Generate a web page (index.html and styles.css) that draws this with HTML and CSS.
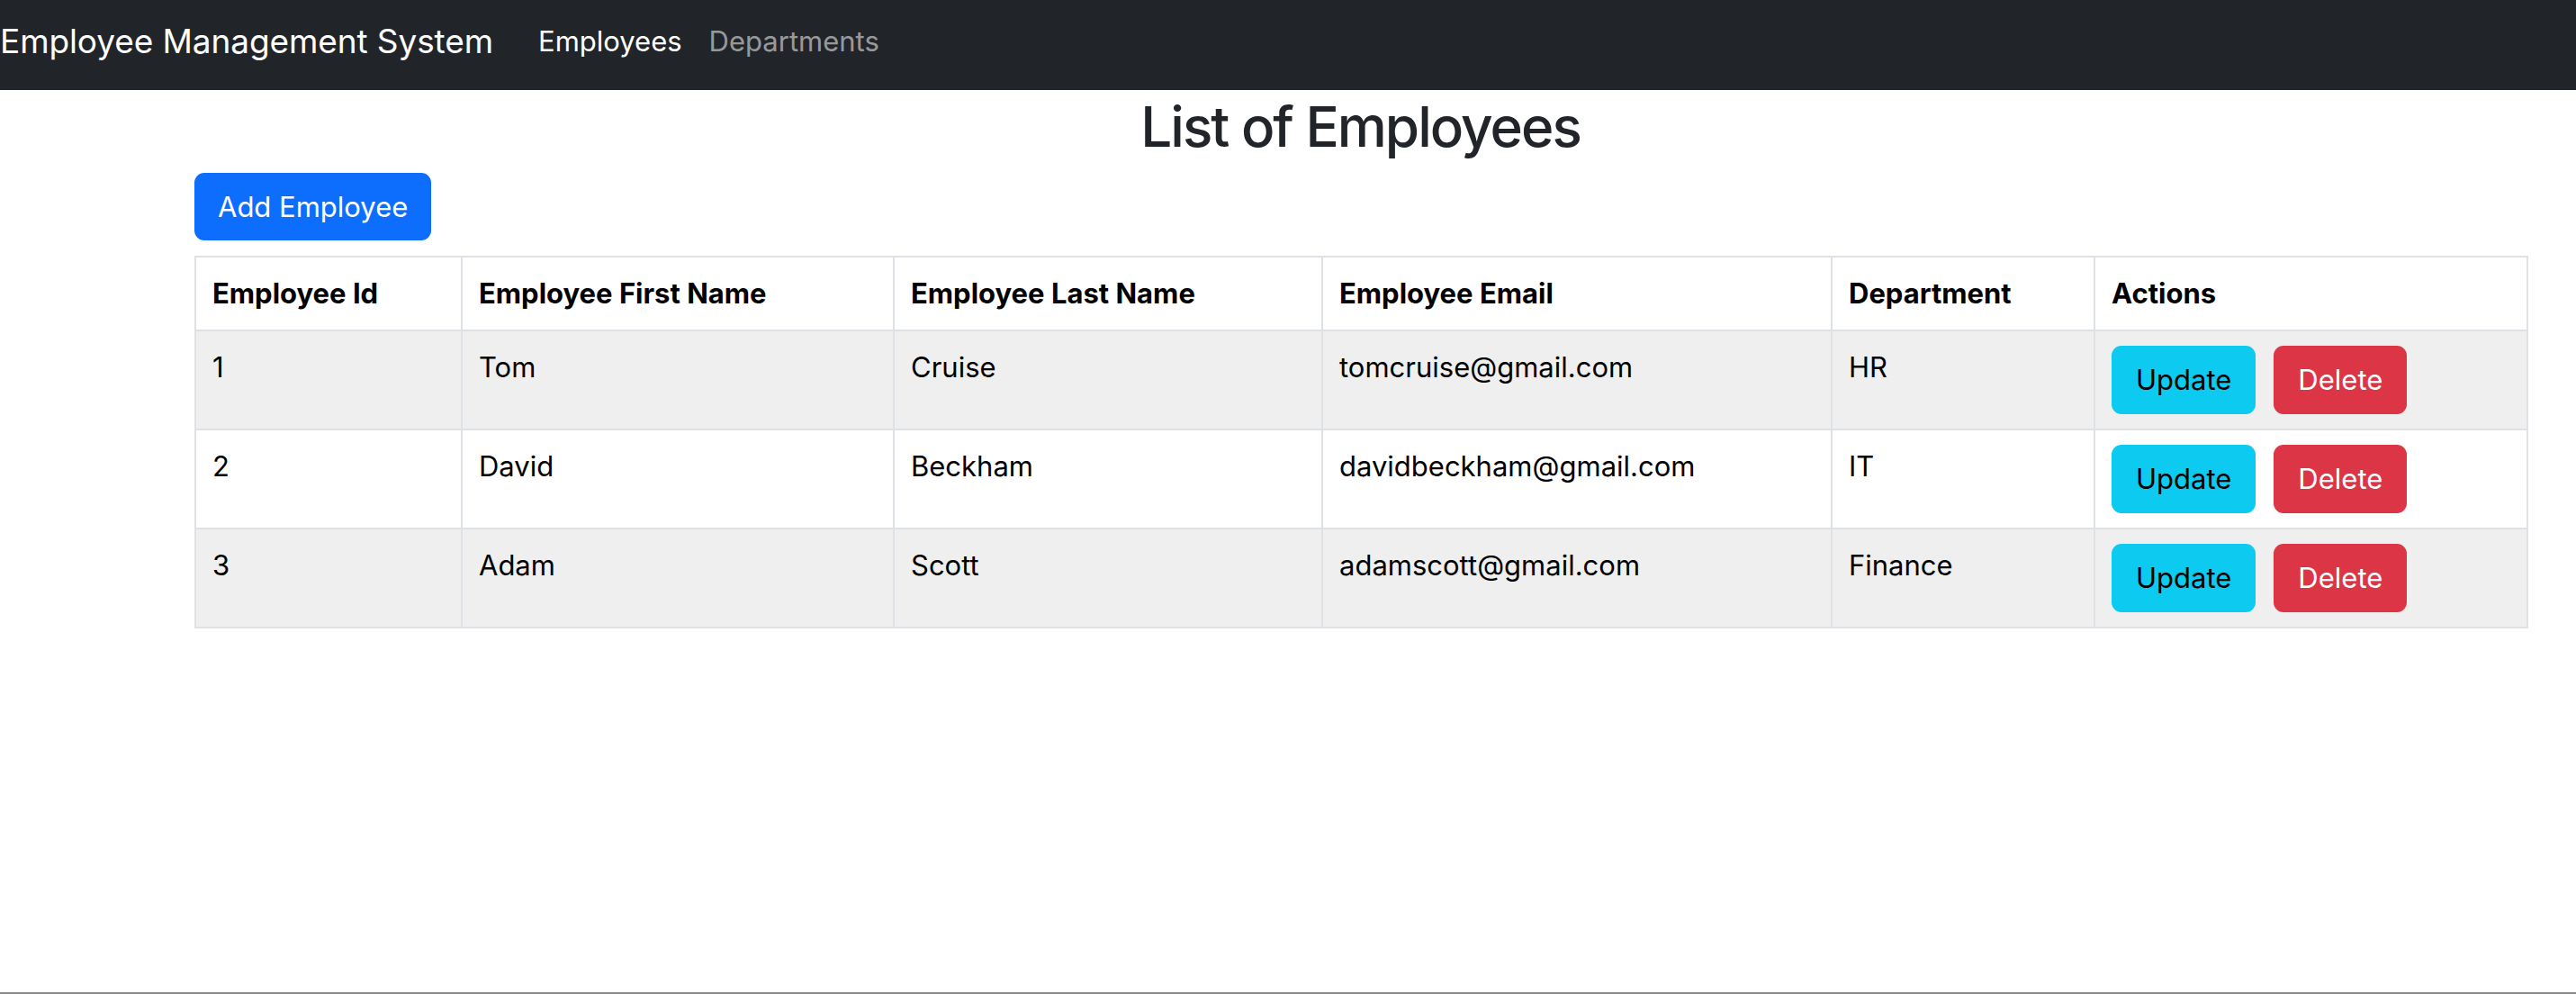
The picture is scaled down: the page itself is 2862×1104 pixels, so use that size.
FILE: index.html
```html
<!DOCTYPE html>
<html lang="en">
<head>
<meta charset="utf-8">
<title>Employee Management System</title>
<link rel="stylesheet" href="styles.css">
</head>
<body>
<div class="page">
  <nav class="navbar">
    <span class="brand">Employee Management System</span>
    <a class="nav-link active" href="#">Employees</a>
    <a class="nav-link" href="#">Departments</a>
  </nav>
  <main class="container">
    <h1 class="title">List of Employees</h1>
    <div class="toolbar">
      <button class="btn btn-primary btn-add">Add Employee</button>
    </div>
    <table class="table">
      <colgroup>
        <col class="c-id"><col class="c-first"><col class="c-last"><col class="c-email"><col class="c-dept"><col class="c-act">
      </colgroup>
      <thead>
        <tr>
          <th>Employee Id</th>
          <th>Employee First Name</th>
          <th>Employee Last Name</th>
          <th>Employee Email</th>
          <th>Department</th>
          <th>Actions</th>
        </tr>
      </thead>
      <tbody>
        <tr class="striped">
          <td>1</td><td>Tom</td><td>Cruise</td><td>tomcruise@gmail.com</td><td>HR</td>
          <td><button class="btn btn-info">Update</button><button class="btn btn-danger">Delete</button></td>
        </tr>
        <tr>
          <td>2</td><td>David</td><td>Beckham</td><td>davidbeckham@gmail.com</td><td>IT</td>
          <td><button class="btn btn-info">Update</button><button class="btn btn-danger">Delete</button></td>
        </tr>
        <tr class="striped">
          <td>3</td><td>Adam</td><td>Scott</td><td>adamscott@gmail.com</td><td>Finance</td>
          <td><button class="btn btn-info">Update</button><button class="btn btn-danger">Delete</button></td>
        </tr>
      </tbody>
    </table>
  </main>
  <div class="bottom-line"></div>
</div>
</body>
</html>
```

FILE: styles.css
```css
* { box-sizing: border-box; }
html, body { margin: 0; padding: 0; }
body {
  background: #ffffff;
  font-family: Inter, "Noto Sans", "Liberation Sans", sans-serif;
  color: #212529;
}
.page {
  min-height: 100vh;
  display: flex;
  flex-direction: column;
}
.navbar {
  height: 100px;
  background: #212529;
  display: flex;
  align-items: center;
  padding: 0 0 10px 0;
}
.brand {
  color: #ffffff;
  font-size: 37px;
  letter-spacing: -0.1px;
  margin-right: 35px;
  white-space: nowrap;
}
.nav-link {
  color: rgba(255, 255, 255, 0.55);
  text-decoration: none;
  font-size: 31px;
  padding: 0 15px;
}
.nav-link.active { color: #ffffff; }
.container {
  margin-left: 216px;
  width: 2591px;
}
.title {
  margin: 0 0 10px 0;
  text-align: center;
  font-size: 62px;
  letter-spacing: -2px;
  font-weight: 500;
  line-height: 82px;
  color: #212529;
}
.toolbar {
  padding-bottom: 17px;
}
.btn {
  font-family: inherit;
  font-size: 31px;
  height: 76px;
  border: none;
  border-radius: 11px;
  padding: 0 27px;
  line-height: 76px;
  cursor: pointer;
}
.btn-add { height: 75px; padding: 0 26px; }
.btn-primary { background: #0d6efd; color: #ffffff; }
.btn-info { background: #0dcaf0; color: #000000; margin-right: 20px; }
.btn-danger { background: #dc3545; color: #ffffff; }
.table {
  border-collapse: collapse;
  table-layout: fixed;
  width: 2591px;
  border: 2px solid #dee2e6;
  color: #000000;
}
.c-id { width: 296px; }
.c-first { width: 480px; }
.c-last { width: 476px; }
.c-email { width: 566px; }
.c-dept { width: 292px; }
.c-act { width: 481px; }
.table th, .table td {
  border: 2px solid #dee2e6;
  padding: 16px 18px;
  font-size: 31px;
  line-height: 48px;
  text-align: left;
  vertical-align: top;
}
.table th { font-weight: 700; }
.table tr.striped td { background: #efefef; }
.bottom-line {
  margin-top: auto;
  height: 2px;
  background: #8a8a8a;
}
```
